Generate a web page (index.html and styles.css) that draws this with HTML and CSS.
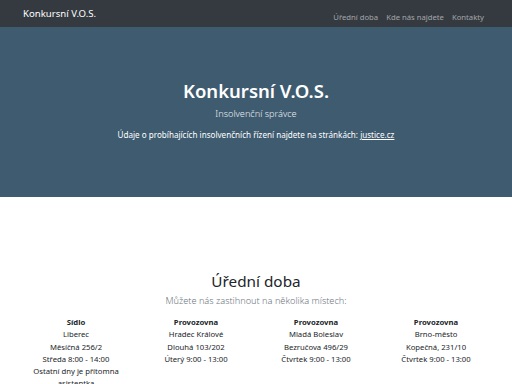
FILE: index.html
```html
<!DOCTYPE html>
<html lang="cs">
<head>
  <meta charset="UTF-8">
  <meta name="viewport" content="width=device-width, initial-scale=1.0">
  <title>Konkursní V.O.S.</title>
  <link rel="stylesheet" href="styles.css">
</head>
<body>
  <nav class="navbar">
    <a class="brand" href="#">Konkursní V.O.S.</a>
    <ul class="nav-links">
      <li><a href="#doba">Úřední doba</a></li>
      <li><a href="#kde">Kde nás najdete</a></li>
      <li><a href="#kontakty">Kontakty</a></li>
    </ul>
  </nav>

  <header class="hero">
    <h1>Konkursní V.O.S.</h1>
    <p class="lead">Insolvenční správce</p>
    <p class="info">Údaje o probíhajících insolvenčních řízení najdete na stránkách: <a href="#">justice.cz</a></p>
  </header>

  <section class="hours" id="doba">
    <h2>Úřední doba</h2>
    <p class="sub">Můžete nás zastihnout na několika místech:</p>
    <div class="places">
      <div class="place">
        <strong>Sídlo</strong>
        <span>Liberec</span>
        <span>Měsíčná 256/2</span>
        <span>Středa 8:00 - 14:00</span>
        <span>Ostatní dny je přítomna asistentka</span>
      </div>
      <div class="place">
        <strong>Provozovna</strong>
        <span>Hradec Králové</span>
        <span>Dlouhá 103/202</span>
        <span>Úterý 9:00 - 13:00</span>
      </div>
      <div class="place">
        <strong>Provozovna</strong>
        <span>Mladá Boleslav</span>
        <span>Bezručova 496/29</span>
        <span>Čtvrtek 9:00 - 13:00</span>
      </div>
      <div class="place">
        <strong>Provozovna</strong>
        <span>Brno-město</span>
        <span>Kopečná, 231/10</span>
        <span>Čtvrtek 9:00 - 13:00</span>
      </div>
    </div>
  </section>
</body>
</html>
```

FILE: styles.css
```css
body {
  font-family: "Noto Sans", "Open Sans", sans-serif;
  color: #212529;
  background-color: #fff;
  margin: 0;
  padding: 0;
}
.navbar {
  display: flex;
  justify-content: space-between;
  align-items: center;
  height: 27px;
  padding: 0 28px 0 23px;
  background-color: #343a40;
}
.brand {
  color: #fff;
  font-size: 9.6px;
  text-decoration: none;
}
.nav-links {
  list-style-type: none;
  display: flex;
  gap: 8px;
  margin: 0;
  padding: 0;
}
.nav-links a {
  color: rgba(255,255,255,0.55);
  font-size: 7.7px;
  text-decoration: none;
}
.hero {
  background-color: #3e5b70;
  color: #fff;
  text-align: center;
  height: 170px;
  padding-top: 1px;
  box-sizing: border-box;
}
.hero h1 {
  font-size: 18.5px;
  font-weight: 600;
  margin: 50px 0 0;
  line-height: 26px;
}
.hero .lead {
  font-size: 9.2px;
  font-weight: 300;
  margin: 3px 0 0;
  color: #e9eef2;
}
.hero .info {
  font-size: 8.1px;
  margin: 9px 0 0;
}
.hero .info a {
  color: #fff;
}
.hours {
  text-align: center;
  padding-top: 73px;
}
.hours h2 {
  font-size: 15.3px;
  font-weight: 400;
  margin: 0;
  line-height: 22px;
}
.hours .sub {
  font-size: 9.2px;
  font-weight: 300;
  color: #6c757d;
  margin: 2px 0 0;
}
.places {
  display: grid;
  grid-template-columns: repeat(4, 1fr);
  width: 480px;
  margin: 9px auto 0;
  font-size: 7.7px;
  line-height: 12.3px;
}
.place {
  display: flex;
  flex-direction: column;
  padding: 0 15px;
}
.place strong {
  font-weight: 700;
}
```
